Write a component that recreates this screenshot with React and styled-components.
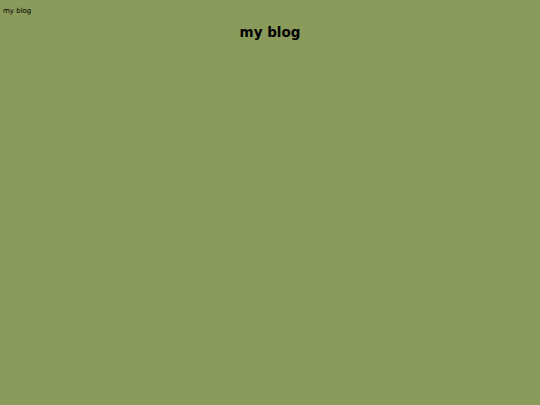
import React from "react";
import styled, { createGlobalStyle } from "styled-components";

const GlobalStyle = createGlobalStyle`
  html, body {
    margin: 0;
    padding: 0;
    background: #8a9a5b;
    font-family: "DejaVu Sans", Verdana, sans-serif;
    color: #000;
  }
`;

const Page = styled.div`
  min-height: 405px;
  background: #8a9a5b;
`;

const TopLink = styled.div`
  padding: 7px 0 0 3px;
  font-size: 7px;
  line-height: 9px;
`;

const Title = styled.h1`
  margin: 8px 0 0;
  text-align: center;
  font-size: 13.5px;
  line-height: 16px;
  font-weight: bold;
`;

export default function App() {
  return (
    <Page>
      <GlobalStyle />
      <TopLink>my blog</TopLink>
      <Title>my blog</Title>
    </Page>
  );
}
